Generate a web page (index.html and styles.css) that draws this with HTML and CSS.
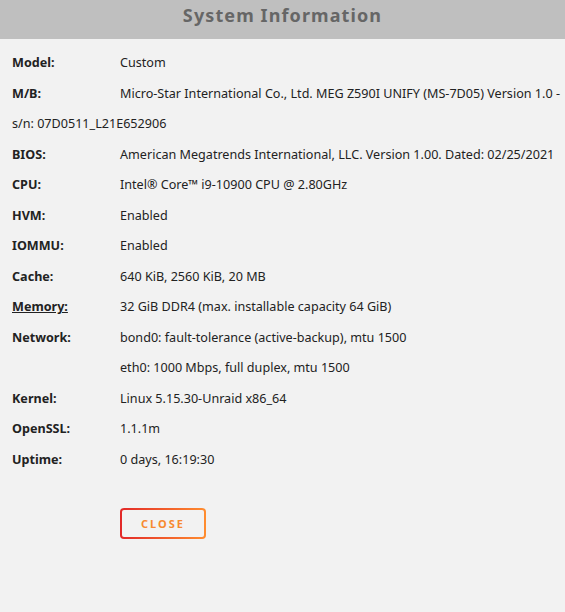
FILE: index.html
```html
<!DOCTYPE html>
<html lang="en">
<head>
    <meta charset="UTF-8">
    <title>System Information</title>
    <link rel="stylesheet" href="styles.css">
</head>
<body>

<div class="dialog">
    <h2 class="dialog-title">System Information</h2>
    <div class="info">
        <div class="label">Model:</div><div class="value">Custom</div>
        <div class="label">M/B:</div><div class="value">Micro-Star International Co., Ltd. MEG Z590I UNIFY (MS-7D05) Version 1.0 -</div>
        <div class="full">s/n: 07D0511_L21E652906</div>
        <div class="label">BIOS:</div><div class="value">American Megatrends International, LLC. Version 1.00. Dated: 02/25/2021</div>
        <div class="label">CPU:</div><div class="value">Intel® Core™ i9-10900 CPU @ 2.80GHz</div>
        <div class="label">HVM:</div><div class="value">Enabled</div>
        <div class="label">IOMMU:</div><div class="value">Enabled</div>
        <div class="label">Cache:</div><div class="value">640 KiB, 2560 KiB, 20 MB</div>
        <div class="label"><a href="#">Memory:</a></div><div class="value">32 GiB DDR4 (max. installable capacity 64 GiB)</div>
        <div class="label">Network:</div><div class="value">bond0: fault-tolerance (active-backup), mtu 1500</div>
        <div class="label"></div><div class="value">eth0: 1000 Mbps, full duplex, mtu 1500</div>
        <div class="label">Kernel:</div><div class="value">Linux 5.15.30-Unraid x86_64</div>
        <div class="label">OpenSSL:</div><div class="value">1.1.1m</div>
        <div class="label">Uptime:</div><div class="value">0 days, 16:19:30</div>
    </div>
    <div class="actions">
        <button type="button" class="btn-close">Close</button>
    </div>
</div>

</body>
</html>
```

FILE: styles.css
```css
body {
    margin: 0;
    background-color: #f2f2f2;
    font-family: "Noto Sans", Arial, sans-serif;
    color: #222;
    overflow: hidden;
}
.dialog {
    width: 565px;
    overflow: hidden;
}
.dialog-title {
    margin: 0;
    height: 39px;
    line-height: 31px;
    background-color: #bfbfbf;
    color: #666;
    font-size: 18px;
    font-weight: bold;
    letter-spacing: 1.1px;
    text-align: center;
}
.info {
    display: grid;
    grid-template-columns: 108px 1fr;
    grid-auto-rows: 30.5px;
    padding: 9px 0 0 12px;
    font-size: 12.6px;
    line-height: 30.5px;
}
.info .label {
    font-weight: bold;
}
.info .label a {
    color: #222;
}
.info .value {
    white-space: nowrap;
    min-width: 0;
}
.info .full {
    grid-column: 1 / -1;
}
.actions {
    padding: 33px 0 0 120px;
}
.btn-close {
    width: 86px;
    height: 31px;
    border: 2px solid transparent;
    border-radius: 4px;
    background:
        linear-gradient(#f2f2f2, #f2f2f2) padding-box,
        linear-gradient(90deg, #e22828, #ff8d2f) border-box;
    color: #f7892f;
    font-family: inherit;
    font-size: 11px;
    font-weight: bold;
    letter-spacing: 2px;
    text-transform: uppercase;
}
```
